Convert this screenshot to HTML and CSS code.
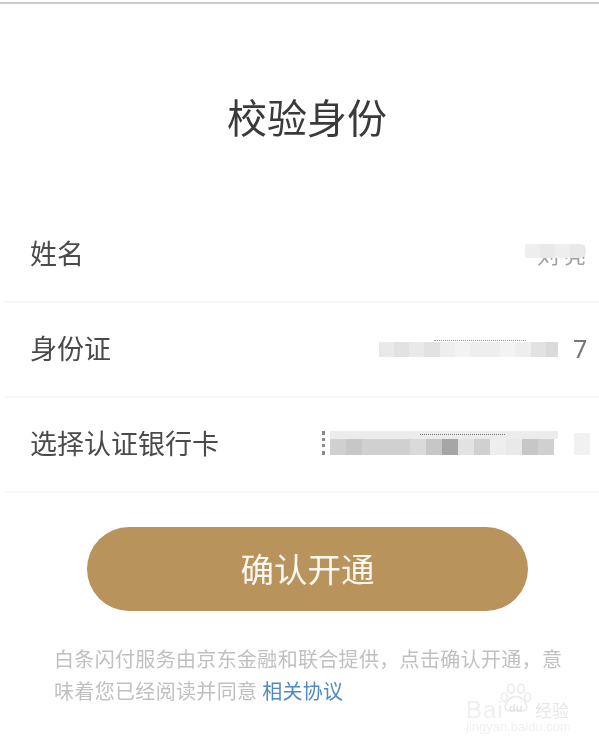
FILE: index.html
```html
<!DOCTYPE html>
<html lang="zh-CN">
<head>
<meta charset="utf-8">
<title>校验身份</title>
<link rel="stylesheet" href="styles.css">
</head>
<body>
<main class="page">
  <h1 class="title">校验身份</h1>
  <section class="form">
    <div class="row">
      <span class="label">姓名</span>
      <div class="value">
        <div class="name-mask">
          <div class="mask mask-name">
            <i class="c w15 g1"></i><i class="c w15 g2"></i><i class="c w15 g1"></i><i class="c w16 g2"></i>
          </div>
          <div class="ghost">刘 亮</div>
        </div>
      </div>
    </div>
    <div class="row">
      <span class="label">身份证</span>
      <div class="value">
        <div class="mask mask-id">
          <i class="c w16 g2"></i><i class="c w16 g3"></i><i class="c w16 g2"></i><i class="c w16 g3"></i><i class="c w16 g1"></i><i class="c w16 g0"></i><i class="c w32 g1"></i><i class="c w16 g0"></i><i class="c w16 g1"></i><i class="c w16 g3"></i><i class="c w13 g4"></i>
        </div>
        <span class="digit">7</span>
      </div>
    </div>
    <div class="row">
      <span class="label">选择认证银行卡</span>
      <div class="value">
        <span class="stub"></span>
        <div class="mask-card">
          <div class="mask mask-top"></div>
          <div class="mask mask-main">
            <i class="c w16 g5"></i><i class="c w16 g6"></i><i class="c w16 g5"></i><i class="c w16 g5"></i><i class="c w16 g5"></i><i class="c w16 g4"></i><i class="c w16 g6"></i><i class="c w16 g8"></i><i class="c w16 g3"></i><i class="c w16 g5"></i><i class="c w16 g1"></i><i class="c w16 g2"></i><i class="c w16 g6"></i><i class="c w16 g5"></i>
          </div>
        </div>
        <span class="mask-end"></span>
      </div>
    </div>
  </section>
  <button class="confirm" type="button">确认开通</button>
  <p class="note">白条闪付服务由京东金融和联合提供，点击确认开通，意味着您已经阅读并同意 <a class="link" href="#">相关协议</a></p>
  <div class="watermark" aria-label="Baidu经验">
    <svg class="paw" viewBox="0 0 40 36" width="34" height="30" aria-hidden="true">
      <g fill="none" stroke="#ececec" stroke-width="2">
        <ellipse cx="6" cy="17" rx="3.6" ry="5"/>
        <ellipse cx="14" cy="7" rx="4" ry="5.5"/>
        <ellipse cx="26" cy="7" rx="4" ry="5.5"/>
        <ellipse cx="34" cy="17" rx="3.6" ry="5"/>
        <path d="M20 16c-6 0-12 6-13 12-.5 4 3 6 7 5 4-1 8-1 12 0 4 1 7.500-1 7-5-1-6-7-12-13-12z"/>
      </g>
    </svg>
    <span class="wm-bai">Bai</span>
    <span class="wm-du">du</span>
    <span class="wm-jy">经验</span>
    <span class="wm-url">jingyan.baidu.com</span>
  </div>
</main>
</body>
</html>
```
FILE: styles.css
```css
* { box-sizing: border-box; }
html, body { margin: 0; padding: 0; background: #fff; }
body { font-family: "Noto Sans CJK SC", "Noto Sans", sans-serif; }
.page {
  position: relative;
  width: 599px;
  height: 742px;
  overflow: hidden;
  border-top: 2px solid #fff;
  padding-top: 1px;
  background: linear-gradient(#cbcbcb, #cbcbcb) 0 0 / 100% 2px no-repeat #fff;
  filter: blur(0.6px);
}
.title {
  margin: 0;
  height: 205px;
  padding: 81px 0 0 15px;
  font-size: 40px;
  line-height: 64px;
  font-weight: 400;
  color: #3a3a3a;
  text-align: center;
}
.form { display: flex; flex-direction: column; }
.row {
  display: flex;
  align-items: center;
  height: 95px;
  padding: 0 9px 0 26px;
  margin-left: 4px;
  border-bottom: 2px solid #f8f8f8;
}
.label { font-size: 27px; line-height: 36px; color: #4a4a4a; padding-bottom: 3px; }
.value {
  margin-left: auto;
  display: flex;
  align-items: center;
  height: 100%;
}
.mask { display: flex; }
.c { display: block; height: 100%; }
.w13 { width: 13px; } .w15 { width: 15px; } .w16 { width: 16px; } .w32 { width: 32px; }
.g0 { background: #f3f3f3; }
.g1 { background: #eeeeee; }
.g2 { background: #e9e9e9; }
.g3 { background: #e2e2e2; }
.g4 { background: #dadada; }
.g5 { background: #d0d0d0; }
.g6 { background: #c7c7c7; }
.g8 { background: #a6a6a6; }
.name-mask {
  position: relative;
  width: 61px;
  height: 22px;
  margin: 0 4px 0 0;
}
.mask-name { position: relative; z-index: 1; height: 14px; border-radius: 2px 6px 6px 2px; overflow: hidden; }
.ghost {
  position: absolute;
  top: -3px;
  right: 0;
  width: 61px;
  font-size: 22px;
  line-height: 24px;
  color: #a0a0a0;
  text-align: right;
  white-space: pre;
}
.mask-id { position: relative; height: 15px; width: 179px; }
.mask-id::before {
  content: "";
  position: absolute;
  left: 55px;
  top: -2px;
  width: 92px;
  border-top: 1px dotted #999;
}
.digit {
  margin-left: 15px;
  margin-right: 5px;
  width: 12px;
  padding-bottom: 3px;
  font-family: "Noto Sans", sans-serif;
  font-size: 25px;
  line-height: 30px;
  color: #777;
}
.stub {
  width: 6px;
  height: 24px;
  margin-right: 2px;
  border-left: 3px dotted #888;
  transform: translateY(-2px);
}
.mask-card { position: relative; display: flex; flex-direction: column; width: 228px; height: 24px; transform: translateY(-2px); }
.mask-card::before {
  content: "";
  position: absolute;
  left: 90px;
  top: 3px;
  width: 85px;
  border-top: 1px dotted #777;
}
.mask-top { height: 8px; background: #ececec; }
.mask-main { height: 16px; }
.mask-end { width: 16px; height: 22px; margin-left: 16px; background: #f1f1f1; transform: translateY(-1px); }
.confirm {
  display: block;
  width: 441px;
  height: 84px;
  margin: 34px 0 0 87px;
  padding: 0 0 3px;
  border: 0;
  border-radius: 42px;
  background: #b9935c;
  color: #fbf6ee;
  font-family: inherit;
  font-size: 33.5px;
  line-height: 78px;
}
.note {
  width: 510px;
  margin: 32px 0 0 54px;
  font-size: 20px;
  line-height: 32px;
  letter-spacing: 0.33px;
  color: #c0c0c0;
}
.link { color: #4f89c6; text-decoration: none; }
.watermark {
  position: absolute;
  left: 464px;
  top: 680px;
  width: 112px;
  height: 56px;
}
.paw { position: absolute; left: 35px; top: 1px; }
.wm-bai {
  position: absolute;
  left: 2px;
  top: 15px;
  font-family: "Liberation Sans", sans-serif;
  font-size: 24px;
  line-height: 26px;
  color: #efefef;
  letter-spacing: 1px;
}
.wm-du {
  position: absolute;
  left: 45px;
  top: 20px;
  font-family: "Liberation Sans", sans-serif;
  font-size: 11px;
  line-height: 12px;
  font-weight: 700;
  color: #e6e6e6;
}
.wm-jy {
  position: absolute;
  left: 71px;
  top: 17px;
  font-size: 17px;
  line-height: 22px;
  color: #e8e8e8;
}
.wm-url {
  position: absolute;
  left: 2px;
  top: 37px;
  font-family: "Liberation Sans", sans-serif;
  font-size: 13px;
  line-height: 16px;
  color: #f0f0f0;
  white-space: nowrap;
}
```
